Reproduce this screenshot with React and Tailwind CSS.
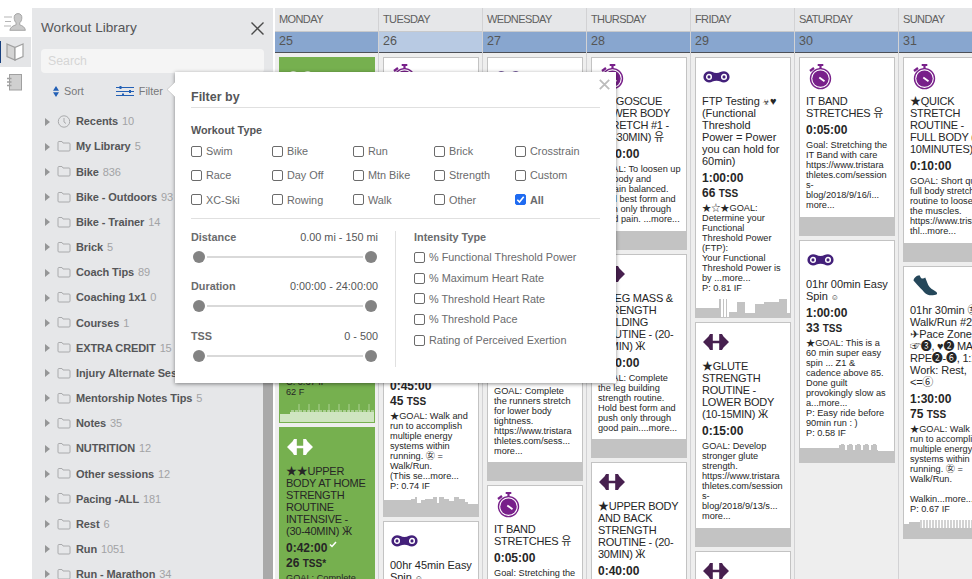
import React from "react";

const FONT = "font-['Liberation_Sans','Noto_Sans_CJK_KR','DejaVu_Sans',sans-serif]";

const LIBRARY = [
  ["Recents", 10],
  ["My Library", 5],
  ["Bike", 836],
  ["Bike - Outdoors", 93],
  ["Bike - Trainer", 14],
  ["Brick", 5],
  ["Coach Tips", 89],
  ["Coaching 1x1", 0],
  ["Courses", 1],
  ["EXTRA CREDIT", 15],
  ["Injury Alternate Sessions", ""],
  ["Mentorship Notes Tips", 5],
  ["Notes", 35],
  ["NUTRITION", 12],
  ["Other sessions", 12],
  ["Pacing -ALL", 181],
  ["Rest", 6],
  ["Run", 1051],
  ["Run - Marathon", 34],
];

const TYPES = [
  "Swim", "Bike", "Run", "Brick", "Crosstrain",
  "Race", "Day Off", "Mtn Bike", "Strength", "Custom",
  "XC-Ski", "Rowing", "Walk", "Other", "All",
];

const RANGES = [
  ["Distance", "0.00 mi - 150 mi"],
  ["Duration", "0:00:00 - 24:00:00"],
  ["TSS", "0 - 500"],
];

const INTENSITY = [
  "% Functional Threshold Power",
  "% Maximum Heart Rate",
  "% Threshold Heart Rate",
  "% Threshold Pace",
  "Rating of Perceived Exertion",
];

// Charts are lists of [x, width, height, opacity] on a 96x19 strip
const seq = (n, fn) => Array.from({ length: n }, (_, i) => fn(i));

const CHARTS = {
  mon: [
    [1, 10, 8],
    [11, 84, 10],
    [95, 1, 7],
    ...seq(21, (i) => [12 + i * 4, 3, 12, 0.6]),
    ...seq(8, (i) => [19 + i * 10, 2, 18, 0.3]),
  ],
  tue: [
    [0, 28, 16], [28, 4, 17], [32, 2, 19], [34, 4, 13], [38, 4, 16], [42, 8, 17],
    [50, 4, 19], [54, 2, 13], [56, 5, 19], [61, 5, 17], [66, 5, 15], [71, 5, 19],
    [76, 6, 17], [82, 3, 14], [85, 11, 12],
  ],
  fri: [
    [0, 24, 9], [24, 2, 18], [28, 1, 18], [31, 1, 18], [34, 8, 5], [42, 8, 15],
    [50, 10, 4], [60, 9, 13], [69, 15, 15], [84, 8, 18], [92, 4, 4],
  ],
  sat: [
    [0, 40, 14],
    ...seq(5, (i) => [40 + i * 8, 6, 17]),
    ...seq(5, (i) => [42 + i * 8, 3, 18]),
    [40, 39, 12],
    [79, 17, 11],
  ],
  sun: [[0, 6, 14], [6, 11, 16], [17, 79, 10], ...seq(27, (i) => [17 + i * 3, 2, 18, 0.75])],
};

const WEEK = [
  {
    day: "MONDAY", date: 25,
    cards: [
      { h: 366, icon: "chain", done: true, end: true, desc: ["C: 0.67 IF", "62 F"], chart: "mon" },
      {
        h: 220, icon: "dumbbell", done: true,
        title: ["★★UPPER", "BODY AT HOME", "STRENGTH", "ROUTINE", "INTENSIVE -", "(30-40MIN) Ӝ"],
        time: "0:42:00", tss: "26", star: true, desc: ["GOAL: Complete"],
      },
    ],
  },
  {
    day: "TUESDAY", date: 26, today: true,
    cards: [
      {
        h: 460, icon: "watch", end: true, time: "0:45:00", tss: "45", chart: "tue",
        desc: ["★GOAL: Walk and", "run to accomplish", "multiple energy", "systems within", "running. ㊛ =", "Walk/Run.", "(This se...more...", "P: 0.74 IF"],
      },
      { h: 120, icon: "chain", title: ["00hr 45min Easy", "Spin ☺"] },
    ],
  },
  {
    day: "WEDNESDAY", date: 27,
    cards: [
      {
        h: 424, icon: "chain", end: true,
        desc: ["GOAL: Complete", "the runners stretch", "for lower body", "tightness.", "https://www.tristara", "thletes.com/sess...", "more..."],
      },
      { h: 179, icon: "watch", title: ["IT BAND", "STRETCHES 유"], time: "0:05:00", desc: ["Goal: Stretching the"] },
    ],
  },
  {
    day: "THURSDAY", date: 28,
    cards: [
      {
        h: 193, icon: "watch", title: ["★EGOSCUE", "LOWER BODY", "STRETCH #1 -", "(20-30MIN) 유"], time: "0:30:00",
        desc: ["GOAL: To loosen up", "the body and", "remain balanced.", "Hold best form and", "push only through", "good pain. ...more..."],
      },
      {
        h: 204, icon: "dumbbell", title: ["★LEG MASS &", "STRENGTH", "BUILDING", "ROUTINE - (20-", "30MIN) Ӝ"], time: "0:30:00",
        desc: ["GOAL: Complete", "the leg building", "strength routine.", "Hold best form and", "push only through", "good pain....more..."],
      },
      { h: 205, icon: "dumbbell", title: ["★UPPER BODY", "AND BACK", "STRENGTH", "ROUTINE - (20-", "30MIN) Ӝ"], time: "0:40:00" },
    ],
  },
  {
    day: "FRIDAY", date: 29,
    cards: [
      {
        h: 261, icon: "chain", title: ["FTP Testing ☣♥", "(Functional", "Threshold", "Power = Power", "you can hold for", "60min)"],
        time: "1:00:00", tss: "66", chart: "fri",
        desc: ["★☆★GOAL:", "Determine your", "Functional", "Threshold Power", "(FTP):", "Your Functional", "Threshold Power is", "by ...more...", "P: 0.81 IF"],
      },
      {
        h: 225, icon: "dumbbell", title: ["★GLUTE", "STRENGTH", "ROUTINE -", "LOWER BODY", "(10-15MIN) Ӝ"], time: "0:15:00",
        desc: ["GOAL: Develop", "stronger glute", "strength.", "https://www.tristara", "thletes.com/session", "s-", "blog/2018/9/13/s...", "more..."],
      },
      { h: 120, icon: "dumbbell" },
    ],
  },
  {
    day: "SATURDAY", date: 30,
    cards: [
      {
        h: 179, icon: "watch", title: ["IT BAND", "STRETCHES 유"], time: "0:05:00",
        desc: ["Goal: Stretching the", "IT Band with care", "https://www.tristara", "thletes.com/session", "s-", "blog/2018/9/16/i...", "more..."],
      },
      {
        h: 223, icon: "chain", title: ["01hr 00min Easy", "Spin ☺"], time: "1:00:00", tss: "33", chart: "sat",
        desc: ["★GOAL: This is a", "60 min super easy", "spin ... Z1 &", "cadence above 85.", "Done guilt", "provokingly slow as", "a...more...", "P: Easy ride before", "90min run : )", "P: 0.58 IF"],
      },
    ],
  },
  {
    day: "SUNDAY", date: 31,
    cards: [
      {
        h: 205, icon: "watch", title: ["★QUICK", "STRETCH", "ROUTINE -", "FULL BODY (5-", "10MINUTES)"], time: "0:10:00",
        desc: ["GOAL: Short quick", "full body stretch", "routine to loosen", "the muscles.", "https://www.tristara", "thl...more..."],
      },
      {
        h: 273, icon: "shoe", title: ["01hr 30min ㊛", "Walk/Run #2:", "✈Pace Zones", "☞❸, ♥❷ MAX", "RPE❷-❻, 1:1", "Work: Rest,", "<=⑥"],
        time: "1:30:00", tss: "75", chart: "sun",
        desc: ["★GOAL: Walk and", "run to accomplish", "multiple energy", "systems within", "running. ㊛ =", "Walk/Run.", "\u00a0", "Walkin...more...", "P: 0.67 IF"],
      },
    ],
  },
];

const SportIcon = ({ kind, done }) => {
  if (kind === "watch") {
    return (
      <svg className="ml-[9px] mt-[6px] shrink-0" width="23" height="26" viewBox="0 0 23 26">
        <g fill="none" stroke="#78208a">
          <circle cx="11.5" cy="14.6" r="10" strokeWidth="1.4" />
          <path d="M8.7 1h5.6M11.5 1v4" strokeWidth="2.2" />
          <path d="M1 7l4-3" strokeWidth="2.2" />
        </g>
        <circle cx="11.5" cy="14.6" r="8.2" fill="#78208a" />
        <path d="M10.3 13.4l5.2 3.8" stroke="#fff" strokeWidth="1.8" />
      </svg>
    );
  }
  if (kind === "chain") {
    const fill = done ? "#fff" : "#43207a";
    const hole = done ? "#76b04f" : "#fff";
    return (
      <svg className="ml-[7px] mt-[13px] shrink-0" width="27" height="12" viewBox="0 0 27 12">
        <path d="M6 .3c3 0 4 1.7 7.5 1.7S18 .3 21 .3a5.6 5.6 0 010 11.2c-3 0-4-1.7-7.5-1.7S9 11.5 6 11.5A5.6 5.6 0 016 .3z" fill={fill} />
        <g fill="none" stroke={hole} strokeWidth="1.5">
          <circle cx="6" cy="5.9" r="2.3" />
          <circle cx="21" cy="5.9" r="2.3" />
        </g>
      </svg>
    );
  }
  if (kind === "dumbbell") {
    return (
      <svg className="ml-[7px] mt-[11px] shrink-0" width="26" height="16" viewBox="0 0 26 16" fill={done ? "#fff" : "#47204f"}>
        <path d="M0 8l3.5-3.5 2-2L7 0h2.8v6.8h6.4V0H19l1.500 2.500 2 2L26 8l-3.500 3.500-2 2L19 16h-2.800V9.200H9.800V16H7l-1.500-2.500-2-2z" />
      </svg>
    );
  }
  return (
    <svg className="ml-[9px] mt-[8px] shrink-0" width="24" height="21" viewBox="0 0 24 21" fill="#25475a">
      <path d="M.5 5.5C1 3 3.500.5 6.500.3l1.500 2.700c1.500 1 3 .6 4.200-.4l3 7.500c1.500 3 4.500 4.800 7.500 6.300 1.300.7 1.500 1.800 1.200 2.800-2.500 1.200-6.500 1.500-9 .6-3-1.200-4.500-3.800-7.200-6.300L4 9.500z" />
    </svg>
  );
};

const Chart = ({ name, done, end }) => (
  <svg
    className={`-ml-px shrink-0 ${end ? "" : "mt-auto"}`}
    width="96"
    height="19"
    viewBox="0 0 96 19"
    fill={done ? "#cfe5c1" : "#c3c3c3"}
  >
    {CHARTS[name].map(([x, w, h, o = 1], i) => (
      <rect key={i} x={x} y={19 - h} width={w} height={h} opacity={o} shapeRendering="crispEdges" />
    ))}
  </svg>
);

// The small symbols are drawn at a lower size than the letters around them
const TitleLine = ({ text }) => (
  <div className={`h-3 text-[11px] leading-3 ${text === text.toUpperCase() ? "tracking-[-0.25px]" : "tracking-[-0.05px]"}`}>
    {text.split(/([☺☣])/).map((part, i) =>
      part === "☺" || part === "☣" ? (
        <span key={i} className="text-[8px] font-bold leading-none">
          {part}
        </span>
      ) : (
        part
      )
    )}
  </div>
);

const Card = ({ h, icon, title, time, tss, star, desc, chart, done, end }) => (
  <div
    className={`flex w-24 shrink-0 flex-col overflow-hidden border text-[#262626] ${
      done ? "border-[#76b04f] bg-[#76b04f]" : "border-[#c3c3c3] bg-white"
    }`}
    style={{ height: h }}
  >
    <div className="flex h-[37px] shrink-0 items-start">
      <SportIcon kind={icon} done={done} />
    </div>
    <div className={`flex shrink-0 flex-col whitespace-nowrap pl-1.5 ${end ? "mt-auto pb-1.5" : ""}`}>
      {title?.map((line) => (
        <TitleLine key={line} text={line} />
      ))}
      {time && (
        <div className="pt-1 pb-0.5 text-[12px] font-bold leading-[15px]">
          <div className="flex h-[15px]">
            {time}
            {star && (
              <svg className="ml-0.5" width="8" height="8" viewBox="0 0 8 8" fill="none" stroke="#fff" strokeWidth="1.5">
                <path d="M1 3.5l2 2L7 1" />
              </svg>
            )}
          </div>
          {tss && (
            <div className="h-[15px]">
              {tss} <span className="text-[10px]">TSS{star && "*"}</span>
            </div>
          )}
        </div>
      )}
      {desc?.map((line, i) => (
        <div key={i} className="h-2.5 text-[9.2px] leading-[10px]">
          {line}
        </div>
      ))}
    </div>
    {chart ? (
      <Chart name={chart} done={done} end={end} />
    ) : (
      <div className={`${end ? "" : "mt-auto"} h-[18px] shrink-0 bg-[#c3c3c3]`} />
    )}
  </div>
);

const Calendar = () => (
  <div className="ml-0.5 flex min-w-0 flex-1 overflow-hidden bg-[#eee]">
    {WEEK.map(({ day, date, today, cards }) => (
      <div key={day} className="flex w-[104px] shrink-0 flex-col border-r border-[#d2d2d4]">
        <div className="h-6 shrink-0 border-b border-[#c8c9cb] bg-[#e6e7e9] pl-1 text-[11px] leading-[23px] tracking-[-0.6px] text-[#606060]">
          {day}
        </div>
        <div
          className={`h-[21px] shrink-0 border-b border-[#4d5058] pl-1 text-[12.5px] leading-[18px] text-[#555] ${
            today ? "bg-[#b8cae3]" : "bg-[#88a6cf]"
          }`}
        >
          {date}
        </div>
        <div className="flex flex-col gap-1 pl-1 pt-1">
          {cards.map((card, i) => (
            <Card key={i} {...card} />
          ))}
        </div>
      </div>
    ))}
  </div>
);

const Nav = () => (
  <div className="flex w-8 shrink-0 flex-col bg-white">
    <div className="flex h-[29px] items-start pl-1 pt-[5px]">
      <svg width="22" height="18" viewBox="0 0 22 18">
        <path d="M0 4h8M1 8.500h6M0 13h7" stroke="#b5b5b5" strokeWidth="1.2" />
        <path d="M14 .6c-3 0-4 2.200-3.800 4.700.2 2 .9 3.600 1.900 4.500v2c-3 1-5.600 2.100-6.300 5.500h15.600c-.6-3.400-3-4.500-5.700-5.500v-2c1.200-1 1.900-2.500 2.100-4.500C18 2.800 17 .6 14 .6z" fill="#c9c9c9" stroke="#a6a6a6" />
      </svg>
    </div>
    <div className="flex h-[30px] w-[31px] items-center bg-[#e4e5e7]">
      <div className="h-[22px] w-px bg-[#17407f]" />
      <svg className="ml-[5px]" width="18" height="18" viewBox="0 0 18 18" stroke="#a0a0a0" strokeWidth="1.2">
        <path d="M1 1l8 3.500V17l-8-3.500z" fill="#d4d4d4" />
        <path d="M17 1L9 4.500V17l8-3.500z" fill="#fff" />
      </svg>
    </div>
    <svg className="ml-[7px] mt-[7px]" width="15" height="17" viewBox="0 0 15 17" fill="#d0d0d0" stroke="#a0a0a0">
      <rect x="2.5" y=".5" width="12" height="15.5" />
      <path d="M0 4.500h4.500M0 8h4.500M0 11.500h4.500" strokeWidth="1.5" />
    </svg>
  </div>
);

const Sidebar = () => (
  <div className="flex w-[241px] shrink-0 flex-col bg-[#e6e7e9] text-[#555658]">
    <div className="flex h-[38px] shrink-0 items-center justify-between px-[9px] pt-0.5">
      <h1 className="text-[13.6px]">Workout Library</h1>
      <svg width="13" height="13" viewBox="0 0 13 13" stroke="#4a4a4a" strokeWidth="1.4">
        <path d="M.5.5l12 12M12.500.5l-12 12" />
      </svg>
    </div>
    <div className="ml-[9px] mt-[3px] h-6 w-[223px] shrink-0 rounded-sm bg-[#f5f5f5] pl-[7px] text-[12.3px] leading-[25px] text-[#d6d6d6]">
      Search
    </div>
    <div className="flex h-9 shrink-0 items-center text-[10.8px] text-[#77787a]">
      <svg className="ml-[21px] mr-[5px]" width="6" height="11" viewBox="0 0 6 11" fill="#2360b5">
        <path d="M3 0l3 4.800H0zM3 11L0 6.200h6z" />
      </svg>
      Sort
      <svg className="ml-8 mr-[5px]" width="18" height="10" viewBox="0 0 18 10" stroke="#2360b5">
        <path d="M0 1.500h18M0 5.500h18M0 9.500h18" />
        <path d="M4.500 0v3M14 4v3M7 7.500v2.500" strokeWidth="2" />
      </svg>
      Filter
    </div>
    <div className="flex min-h-0 flex-1 overflow-hidden">
      <div className="min-w-0 flex-1">
        {LIBRARY.map(([name, count], i) => (
          <div key={name} className="flex h-[25.17px] items-center whitespace-nowrap pl-[13px] text-[11px]">
            <svg className="mr-[7px] shrink-0" width="5" height="8" viewBox="0 0 5 8" fill="#959697">
              <path d="M0 0l5 4-5 4z" />
            </svg>
            <svg className="mr-[5px] shrink-0" width="14" height="13" viewBox="0 0 14 13" fill="none" stroke="#a9aaac">
              {i === 0 ? (
                <>
                  <circle cx="7" cy="6.5" r="5.7" />
                  <path d="M7 3v4l2 1.500" />
                </>
              ) : (
                <path d="M1 2.500q0-1 1-1h3l1 1.500h6q1 0 1 1V10q0 1-1 1H2q-1 0-1-1z" />
              )}
            </svg>
            <span className="font-bold tracking-[-0.1px] text-[#555658]">{name}</span>
            <span className="ml-1 tracking-[-0.2px] text-[#a2a3a5]">{count}</span>
          </div>
        ))}
      </div>
      <div className="w-2.5 shrink-0 bg-[#a9a9a9]" />
    </div>
  </div>
);

const Check = ({ label, checked }) => (
  <label className="flex items-center gap-1 whitespace-nowrap">
    <span
      className={`flex size-[11px] shrink-0 items-center justify-center rounded-[2px] border ${
        checked ? "border-[#1f6bf1] bg-[#1f6bf1]" : "border-[#6b6b6b] bg-white"
      }`}
    >
      {checked && (
        <svg className="shrink-0" width="9" height="9" viewBox="0 0 9 9" fill="none" stroke="#fff" strokeWidth="1.6">
          <path d="M1.300 4.800l2.200 2.200L7.700 1.800" />
        </svg>
      )}
    </span>
    <span className={checked ? "font-bold" : ""}>{label}</span>
  </label>
);

const FilterPopup = () => (
  <div className="absolute left-[175px] top-[72px] h-[311px] w-[441px] bg-white text-[10.85px] text-[#6a6b6d] shadow-[0_1px_4px_rgba(0,0,0,0.45)]">
    <svg className="absolute -left-2 top-2.5" width="8" height="15" viewBox="0 0 8 15">
      <path d="M8 0L0 7.500 8 15z" fill="#fff" />
      <path d="M8 0L0 7.500 8 15" fill="none" stroke="#c4c4c4" strokeWidth=".8" />
    </svg>
    <svg className="absolute right-1.5 top-[7px]" width="11" height="11" viewBox="0 0 11 11" stroke="#bcbcbc" strokeWidth="1.8">
      <path d="M.8.8l9.400 9.400M10.200.8L.8 10.200" />
    </svg>
    <div className="flex h-full flex-col px-4">
      <h2 className="h-9 shrink-0 border-b border-[#e0e0e0] pt-4 text-[12.5px] font-bold leading-[18px] text-[#555658]">Filter by</h2>
      <h3 className="mt-3.5 h-[17px] shrink-0 text-[10.8px] font-bold leading-4 text-[#555658]">Workout Type</h3>
      <div className="grid h-[80px] shrink-0 auto-rows-[24.3px] grid-cols-[repeat(5,81px)] border-b border-[#e0e0e0]">
        {TYPES.map((t) => (
          <Check key={t} label={t} checked={t === "All"} />
        ))}
      </div>
      <div className="mt-3 flex h-[136px] shrink-0">
        <div className="w-[205px] shrink-0 border-r border-[#e0e0e0] pr-[17px]">
          {RANGES.map(([name, value]) => (
            <div key={name} className="h-[49.4px]">
              <div className="flex justify-between leading-3">
                <span className="font-bold">{name}</span>
                <span className="text-[#555658]">{value}</span>
              </div>
              <div className="mt-2 flex items-center gap-0.5 pl-0.5 pr-px">
                <span className="size-3 rounded-full bg-[#838383]" />
                <span className="h-0.5 flex-1 bg-[#d9d9d9]" />
                <span className="size-3 rounded-full bg-[#838383]" />
              </div>
            </div>
          ))}
        </div>
        <div className="pl-[18px]">
          <div className="font-bold leading-3">Intensity Type</div>
          <div className="mt-1 flex flex-col">
            {INTENSITY.map((t) => (
              <div key={t} className="flex h-[20.7px] items-center">
                <Check label={t} />
              </div>
            ))}
          </div>
        </div>
      </div>
    </div>
  </div>
);

export default function App() {
  return (
    <div className={`relative flex h-[579px] w-[972px] overflow-hidden bg-white pt-2 ${FONT}`}>
      <Nav />
      <Sidebar />
      <Calendar />
      <FilterPopup />
    </div>
  );
}
